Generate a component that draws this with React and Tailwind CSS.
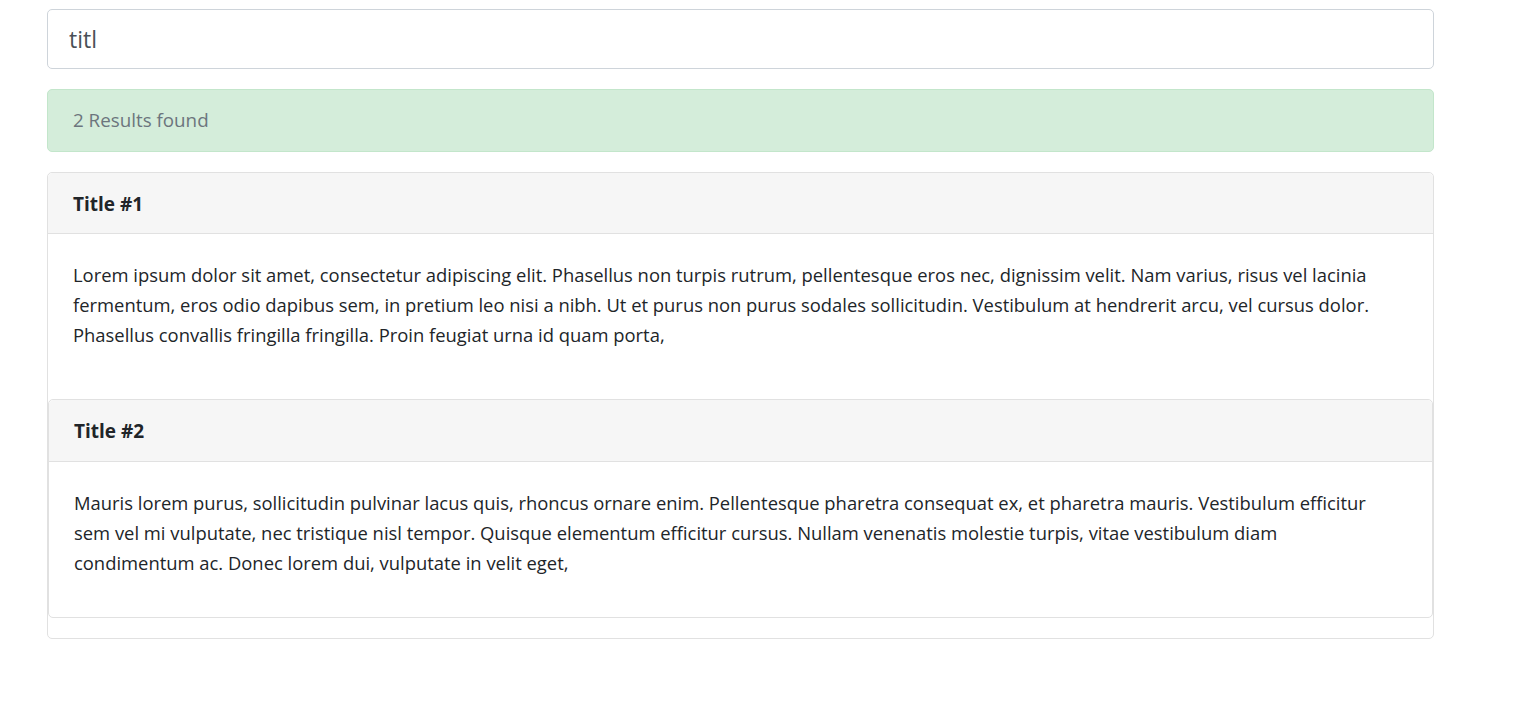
import { useState } from 'react'

const font = { fontFamily: '"Segoe UI", "Open Sans", "Noto Sans", sans-serif' }

const results = [
  {
    title: 'Title #1',
    lines: [
      'Lorem ipsum dolor sit amet, consectetur adipiscing elit. Phasellus non turpis rutrum, pellentesque eros nec, dignissim velit. Nam varius, risus vel lacinia',
      'fermentum, eros odio dapibus sem, in pretium leo nisi a nibh. Ut et purus non purus sodales sollicitudin. Vestibulum at hendrerit arcu, vel cursus dolor.',
      'Phasellus convallis fringilla fringilla. Proin feugiat urna id quam porta,',
    ],
  },
  {
    title: 'Title #2',
    lines: [
      'Mauris lorem purus, sollicitudin pulvinar lacus quis, rhoncus ornare enim. Pellentesque pharetra consequat ex, et pharetra mauris. Vestibulum efficitur',
      'sem vel mi vulputate, nec tristique nisl tempor. Quisque elementum efficitur cursus. Nullam venenatis molestie turpis, vitae vestibulum diam',
      'condimentum ac. Donec lorem dui, vulputate in velit eget,',
    ],
  },
]

function Lines({ lines }) {
  return (
    <p className="text-[18.4px] leading-[30px] text-[#212529] whitespace-nowrap">
      {lines.map((l, i) => (
        <span key={i} className="block">{l}</span>
      ))}
    </p>
  )
}

export default function App() {
  const [query, setQuery] = useState('titl')

  return (
    <div className="min-h-screen bg-white" style={font}>
      <div className="ml-[47px] w-[1387px] pt-[9px]">
        <input
          value={query}
          onChange={(e) => setQuery(e.target.value)}
          className="block w-full h-[60px] px-[21px] text-[23px] text-[#495057] border border-[#ced4da] rounded-[5px] outline-none"
        />

        <div className="mt-[20px] h-[63px] flex items-center px-[25px] bg-[#d4edda] border border-[#c3e6cb] rounded-[5px] text-[18.8px] text-[#6c757d]">
          2 Results found
        </div>

        <div className="mt-[20px] border border-[#e1e1e1] rounded-[5px] pb-[20px]">
          <div className="h-[61px] flex items-center pt-[2px] px-[25px] bg-[#f6f6f6] border-b border-[#e1e1e1] rounded-t-[5px]">
            <h5 className="text-[19px] font-bold text-[#212529]">{results[0].title}</h5>
          </div>
          <div className="px-[25px] pt-[26px] pb-[49px]">
            <Lines lines={results[0].lines} />
          </div>

          <div className="border border-[#e1e1e1] rounded-[5px]">
            <div className="h-[62px] flex items-center pt-[2px] px-[25px] bg-[#f6f6f6] border-b border-[#e1e1e1] rounded-t-[5px]">
              <h5 className="text-[19px] font-bold text-[#212529]">{results[1].title}</h5>
            </div>
            <div className="px-[25px] pt-[26px] pb-[39px]">
              <Lines lines={results[1].lines} />
            </div>
          </div>
        </div>
      </div>
    </div>
  )
}
